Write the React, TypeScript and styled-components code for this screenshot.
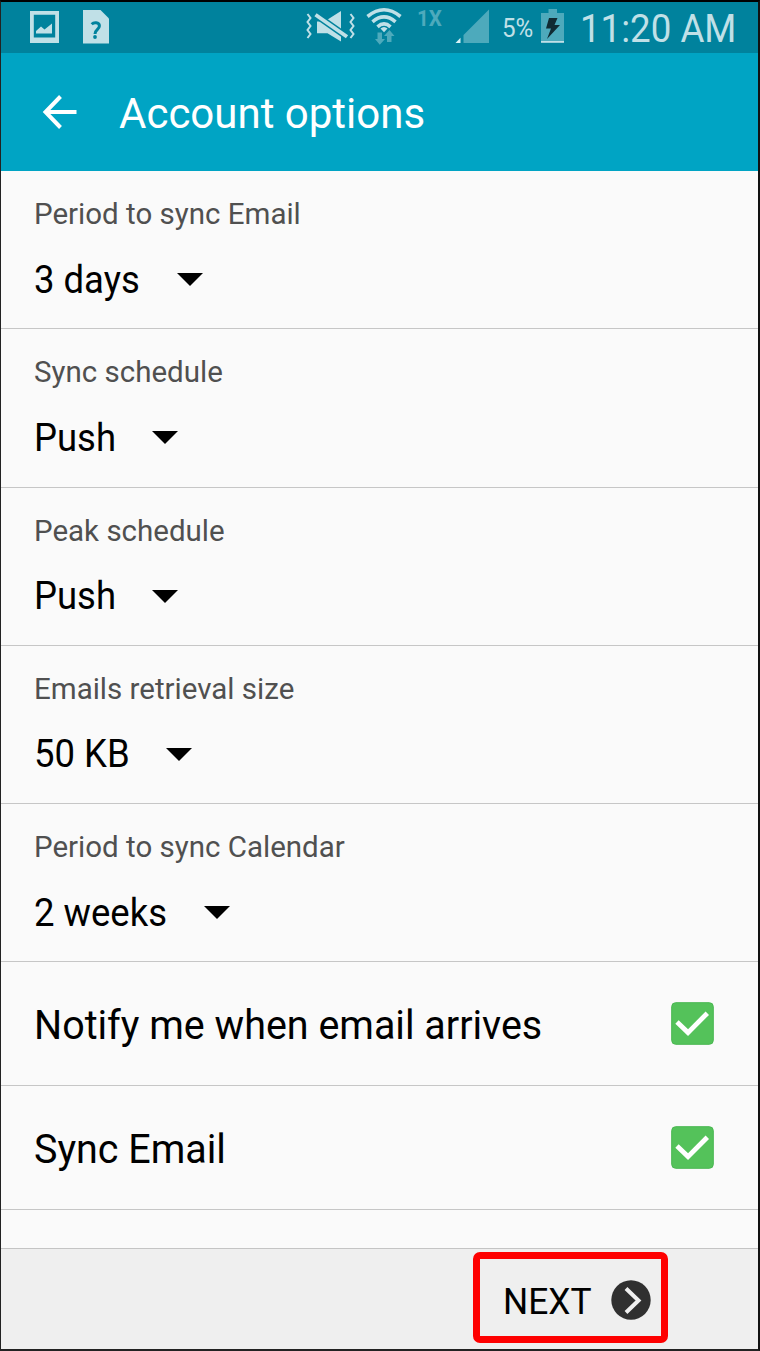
import React from "react";
import styled, { createGlobalStyle } from "styled-components";

const GlobalStyle = createGlobalStyle`
  *, *::before, *::after { box-sizing: border-box; }
  body { margin: 0; background: #000; font-family: Roboto, "Liberation Sans", sans-serif; }
`;

const Screen = styled.div`
  width: 760px;
  height: 1351px;
  display: flex;
  flex-direction: column;
  overflow: hidden;
  background: #fafafa;
  border: 1px solid #222;
  border-top: 2px solid #000;
  border-right: 2px solid #111;
  border-bottom: 2px solid #222;
`;

const StatusBar = styled.header`
  flex: none;
  height: 51px;
  padding: 0 23px 0 29px;
  display: flex;
  justify-content: space-between;
  background: #00829d;
  color: #c0e0e7;
`;

const StatusGroup = styled.div`
  display: flex;
  align-items: flex-start;
`;

const StatusIcon = styled.svg<{ $left?: number; $top: number }>`
  flex: none;
  display: block;
  margin-left: ${(p) => p.$left ?? 0}px;
  margin-top: ${(p) => p.$top}px;
`;

const StatusText = styled.span<{
  $size: number;
  $top: number;
  $left: number;
  $width: number;
  $weight?: number;
  $condense?: number;
  $color?: string;
}>`
  flex: none;
  width: ${(p) => p.$width}px;
  margin-left: ${(p) => p.$left}px;
  margin-top: ${(p) => p.$top}px;
  font-size: ${(p) => p.$size}px;
  line-height: 1;
  font-weight: ${(p) => p.$weight ?? 400};
  transform: scaleX(${(p) => p.$condense ?? 1});
  transform-origin: left center;
  color: ${(p) => p.$color ?? "#c0e0e7"};
  white-space: nowrap;
`;

const TitleBar = styled.div`
  flex: none;
  height: 118px;
  padding-left: 41px;
  display: flex;
  align-items: center;
  background: #00a4c4;
  color: #fff;
`;

const BackIcon = styled.svg`
  display: block;
  margin-right: 41px;
`;

const Title = styled.h1`
  margin: 4px 0 0;
  font-size: 42px;
  line-height: 50px;
  font-weight: 400;
  white-space: nowrap;
`;

const OptionList = styled.main`
  flex: 1;
  min-height: 0;
  overflow: hidden;
`;

const OptionRow = styled.section`
  height: 158.25px;
  padding: 25px 33px 0;
  border-bottom: 1px solid #c6c6c6;
`;

const OptionLabel = styled.div`
  font-size: 29.5px;
  line-height: 36px;
  color: #505050;
  white-space: nowrap;
`;

const OptionSelect = styled.div<{ $gap: number }>`
  display: flex;
  align-items: center;
  gap: ${(p) => p.$gap}px;
  margin-top: 24.5px;
  color: #000;
`;

const OptionValue = styled.span`
  font-size: 38px;
  line-height: 46px;
  white-space: nowrap;
  transform: scaleX(0.96);
  transform-origin: left center;
`;

const CheckRow = styled.label`
  height: 123.9px;
  padding: 0 44px 0 33px;
  display: flex;
  align-items: center;
  justify-content: space-between;
  border-bottom: 1px solid #c6c6c6;
`;

const CheckLabel = styled.span`
  margin-top: 5px;
  font-size: 40px;
  line-height: 48px;
  color: #000;
  white-space: nowrap;
  transform: scaleX(0.986);
  transform-origin: left center;
`;

const Footer = styled.footer`
  flex: none;
  height: 101px;
  padding: 3px 90px 0 0;
  display: flex;
  justify-content: flex-end;
  align-items: flex-start;
  background: #efefef;
  border-top: 1px solid #c4c4c4;
`;

const NextButton = styled.button`
  width: 195px;
  height: 91px;
  padding: 5px 10px 0 23px;
  display: flex;
  align-items: center;
  justify-content: space-between;
  border: 7px solid #fe0000;
  border-radius: 7px;
  background: transparent;
  color: #000;
  font: 400 37px/44px Roboto, "Liberation Sans", sans-serif;
`;

const NextLabel = styled.span`
  padding-top: 3px;
  transform: scaleX(0.955);
  transform-origin: left center;
`;

const options = [
  { label: "Period to sync Email", value: "3 days", gap: 33 },
  { label: "Sync schedule", value: "Push", gap: 33 },
  { label: "Peak schedule", value: "Push", gap: 33 },
  { label: "Emails retrieval size", value: "50 KB", gap: 32.5 },
  { label: "Period to sync Calendar", value: "2 weeks", gap: 31 },
];

const checks = ["Notify me when email arrives", "Sync Email"];

const Arrow = () => (
  <svg width="26" height="13" viewBox="0 0 26 13">
    <path d="M0 0H26L13 13Z" fill="#000" />
  </svg>
);

const CheckBox = () => (
  <svg width="43" height="43" viewBox="0 0 43 43">
    <rect x=".7" y=".7" width="41.6" height="41.6" rx="4" fill="#54c25a" stroke="#49b750" strokeWidth="1" />
    <path d="M6 20L17 30.6L36.3 11.2" fill="none" stroke="#fff" strokeWidth="4.8" />
  </svg>
);

export default function App() {
  return (
    <>
      <GlobalStyle />
      <Screen>
        <StatusBar>
          <StatusGroup>
            <StatusIcon $top={9} width="29" height="32" viewBox="0 0 29 32">
              <path fill="#c0e0e7" fillRule="evenodd" d="M0 0H29V32H0ZM3.8 3.8V26.5H25.2V3.8Z" />
              <path fill="#c0e0e7" d="M6 22.5V20L11 15.5L14.5 18.5L22 12.5V22.5Z" />
            </StatusIcon>
            <StatusIcon $left={23.5} $top={8} width="26" height="34" viewBox="0 0 26 34">
              <path fill="#c0e0e7" d="M0 0H17.5L26 8.5V33.5H0Z" />
              <path
                fill="none"
                stroke="#00829d"
                strokeWidth="3"
                d="M8.7 14.2C10.5 12.4 16.4 11.8 16.4 16.1C16.4 19.3 12 19.6 12 24"
              />
              <circle cx="12" cy="27" r="1.9" fill="#00829d" />
            </StatusIcon>
          </StatusGroup>
          <StatusGroup>
            <StatusIcon $top={8} width="50" height="33" viewBox="0 0 50 33">
              <g fill="none" stroke="#c0e0e7" strokeWidth="2">
                <path d="M1.5 4L4.5 8L1.5 12L4.5 16L1.5 20L4.5 24L1.5 28" />
                <path d="M44.5 4L47.5 8L44.5 12L47.5 16L44.5 20L47.5 24L44.5 28" />
              </g>
              <path fill="#c0e0e7" d="M11 11.5H18.5L35 1V31.5L21.5 23.3H11Z" />
              <path stroke="#00829d" strokeWidth="6.6" d="M8.5 4L42 27.5" />
              <path stroke="#c0e0e7" strokeWidth="3.8" d="M9.5 4.7L41 26.8" />
            </StatusIcon>
            <StatusIcon $left={10} $top={4} width="36" height="39" viewBox="0 0 36 39">
              <g fill="none" stroke="#c0e0e7" strokeWidth="3.6">
                <path d="M1.5 10.5Q18 -3 34.5 10.5" />
                <path d="M6.5 15.8Q18 6 29.5 15.8" />
                <path d="M11.5 20.8Q18 15 24.5 20.8" />
              </g>
              <path fill="#c0e0e7" d="M14.5 22.5Q18 19.5 21.5 22.5L18 26.2Z" />
              <path
                fill="#4daabc"
                d="M11.5 26.5H16V33H19L13.8 38.8L9 33H11.5ZM21 36V30H18L23.5 24L28.5 30H25.5V36Z"
              />
            </StatusIcon>
            <StatusText
              $size={22}
              $top={5.5}
              $left={15}
              $width={26}
              $weight={700}
              $condense={0.94}
              $color="#4daabc"
            >
              1X
            </StatusText>
            <StatusIcon $left={12} $top={7} width="35" height="35" viewBox="0 0 35 35">
              <path fill="#4daabc" d="M8.5 26L34 .5V34H8.5Z" />
              <path fill="#d9f1f5" d="M.5 34L5.5 28.8V34Z" />
            </StatusIcon>
            <StatusText $size={26} $top={12.5} $left={12.5} $width={32} $condense={0.93}>
              5%
            </StatusText>
            <StatusIcon $left={6.5} $top={7} width="24" height="34" viewBox="0 0 24 34">
              <path fill="#4daabc" d="M0 4H7.5V0H16V4H23V32H0Z" />
              <path fill="#c0e0e7" d="M0 32H23V33.8H0Z" />
              <path fill="#102b33" d="M8 9H16.5L13.5 16H19L6 30L10 19.5H5Z" />
            </StatusIcon>
            <StatusText $size={38} $top={8} $left={15.5} $width={155} $condense={0.965}>
              11:20 AM
            </StatusText>
          </StatusGroup>
        </StatusBar>

        <TitleBar>
          <BackIcon width="36" height="34" viewBox="0 0 36 34">
            <path d="M18.5 1.5L3.5 17L18.5 32.5M3 17H34.5" fill="none" stroke="#fff" strokeWidth="4" />
          </BackIcon>
          <Title>Account options</Title>
        </TitleBar>

        <OptionList>
          {options.map((o) => (
            <OptionRow key={o.label}>
              <OptionLabel>{o.label}</OptionLabel>
              <OptionSelect $gap={o.gap}>
                <OptionValue>{o.value}</OptionValue>
                <Arrow />
              </OptionSelect>
            </OptionRow>
          ))}
          {checks.map((label) => (
            <CheckRow key={label}>
              <CheckLabel>{label}</CheckLabel>
              <CheckBox />
            </CheckRow>
          ))}
        </OptionList>

        <Footer>
          <NextButton>
            <NextLabel>NEXT</NextLabel>
            <svg width="40" height="40" viewBox="0 0 40 40">
              <circle cx="20" cy="20" r="19.7" fill="#303030" />
              <path d="M15 8.5L27.5 20.5L15 32.5" fill="none" stroke="#efefef" strokeWidth="4" />
            </svg>
          </NextButton>
        </Footer>
      </Screen>
    </>
  );
}
